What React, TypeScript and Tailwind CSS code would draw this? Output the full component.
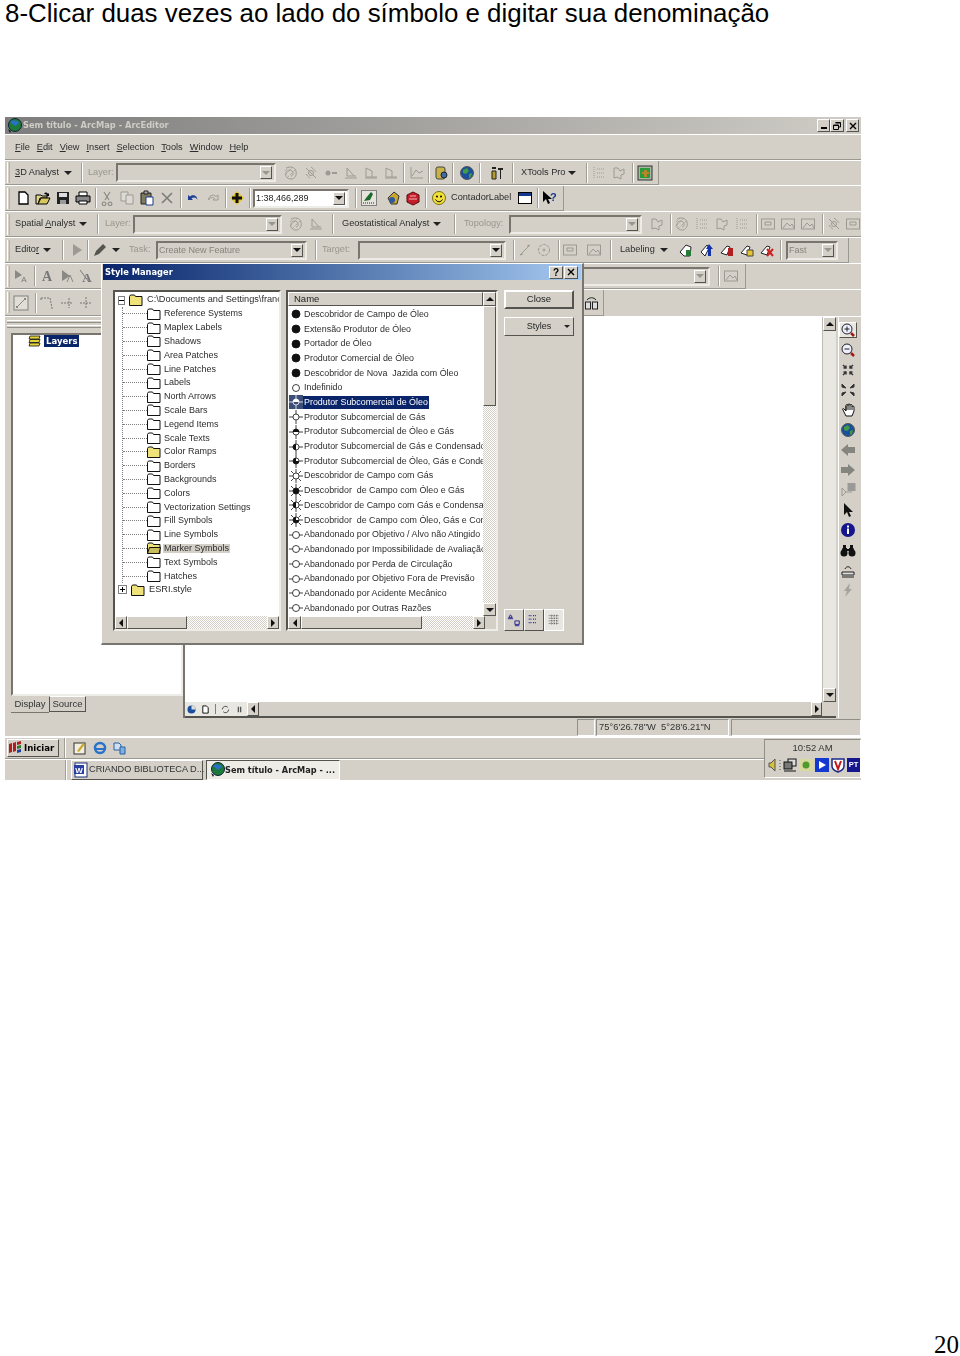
import React from "react";

const treeItems = [
  "Reference Systems", "Maplex Labels", "Shadows", "Area Patches", "Line Patches", "Labels", "North Arrows",
  "Scale Bars", "Legend Items", "Scale Texts", "Color Ramps", "Borders", "Backgrounds", "Colors",
  "Vectorization Settings", "Fill Symbols", "Line Symbols", "Marker Symbols", "Text Symbols", "Hatches",
];

type Fill = "none" | "full" | "top" | "left" | "q3";
const listItems: { name: string; fill: Fill; rays?: number; line?: boolean }[] = [
  { name: "Descobridor de Campo de Óleo", fill: "full" },
  { name: "Extensão Produtor de Óleo", fill: "full" },
  { name: "Portador de Óleo", fill: "full" },
  { name: "Produtor Comercial de Óleo", fill: "full" },
  { name: "Descobridor de Nova  Jazida com Óleo", fill: "full" },
  { name: "Indefinido", fill: "none" },
  { name: "Produtor Subcomercial de Óleo", fill: "top", rays: 4 },
  { name: "Produtor Subcomercial de Gás", fill: "none", rays: 4 },
  { name: "Produtor Subcomercial de Óleo e Gás", fill: "top", rays: 4 },
  { name: "Produtor Subcomercial de Gás e Condensado", fill: "left", rays: 4 },
  { name: "Produtor Subcomercial de Óleo, Gás e Condensado", fill: "q3", rays: 4 },
  { name: "Descobridor de Campo com Gás", fill: "none", rays: 8 },
  { name: "Descobridor  de Campo com Óleo e Gás", fill: "full", rays: 8 },
  { name: "Descobridor de Campo com Gás e Condensado", fill: "left", rays: 8 },
  { name: "Descobridor  de Campo com Óleo, Gás e Condensado", fill: "q3", rays: 8 },
  { name: "Abandonado por Objetivo / Alvo não Atingido", fill: "none", line: true },
  { name: "Abandonado por Impossibilidade de Avaliação", fill: "none", line: true },
  { name: "Abandonado por Perda de Circulação", fill: "none", line: true },
  { name: "Abandonado por Objetivo Fora de Previsão", fill: "none", line: true },
  { name: "Abandonado por Acidente Mecânico", fill: "none", line: true },
  { name: "Abandonado por Outras Razões", fill: "none", line: true },
];

const G = "#9c9a92";
const icons: Record<string, React.ReactNode> = {
  hatch: <g fill="none" stroke={G}><path d="M3 3c4-2 9-1 10 3s-1 8-5 8-6-3-5-6 4-4 6-2 1 5-1 5" /><path d="M2 6l4-4M2 10l8-8M4 13l9-9" strokeDasharray="1 1" /></g>,
  sun: <g fill="none" stroke={G}><path d="M3 3l10 10M8 2c3 2 5 5 5 5M3 9c2 3 4 4 4 4" /><circle cx="8" cy="8" r="2.5" /></g>,
  dots: <g fill={G}><circle cx="5" cy="8" r="2.5" /><path d="M9 7h5v2H9z" /></g>,
  tri1: <path d="M4 3v8h9M2 13h12M4 3l7 8" fill="none" stroke={G} />,
  tri2: <path d="M3 3l6 3v6h5M2 13h12M3 3v9h6" fill="none" stroke={G} />,
  graph: <path d="M2 2v11h12M3 11l4-6 3 3 4-2" fill="none" stroke={G} />,
  book: <g><rect x="3" y="2" width="9" height="12" rx="2" fill="#c9b348" stroke="#444" /><circle cx="11" cy="10" r="3" fill="#3a6ea5" stroke="#222" /></g>,
  globe: <g><circle cx="8" cy="8" r="6.5" fill="#1b4f9c" stroke="#555" /><path d="M4 5l4-2 2 3-3 3-3-1zM10 9l3-1-1 4-2 1z" fill="#3f9b45" /></g>,
  tools: <g><path d="M3 6h4v8H3z" fill="#b59d2b" stroke="#222" /><path d="M9 3h5v2h-2v9h-1V5H9zM3 2h4v2H3z" fill="#222" /></g>,
  grid: <g fill="none" stroke={G} strokeDasharray="1 1"><path d="M3 2v12M6 4h7M6 8h7M6 12h7" /></g>,
  mapg: <path d="M3 3h4l2 3 4-2v5l-3 1v4l-4-2-3 1z" fill="none" stroke={G} />,
  green: <g><rect x="1" y="1" width="14" height="14" fill="#a8b8a0" stroke="#333" /><rect x="3" y="3" width="10" height="10" fill="#2c9a3a" /><path d="M7 5h3v2h2v2h-2v3H7V9H5V7h2z" fill="#b5872a" /></g>,
  new: <path d="M4 2h6l3 3v9H4z" fill="#fff" stroke="#000" strokeWidth="1.3" />,
  open: <g><path d="M1 5h5l1 1h5v2H5l-2 6H1z" fill="#e0d68a" stroke="#000" /><path d="M3 14l3-6h9l-3 6z" fill="#d8c860" stroke="#000" /><path d="M9 4c1-2 3-2 4 0l1-1v3h-3l1-1c-1-1-2-1-3-1z" fill="#000" /></g>,
  save: <g><path d="M2 2h12v12H2z" fill="#222" /><path d="M4 3h8v4H4z" fill="#ddd" /><path d="M5 10h6v4H5z" fill="#999" /></g>,
  print: <g><path d="M4 2h8v4H4z" fill="#fff" stroke="#000" /><path d="M1 6h14v6H1z" fill="#888" stroke="#000" /><path d="M4 11h8v3H4z" fill="#fff" stroke="#000" /></g>,
  cut: <path d="M5 2l5 8M11 2L6 10M5 12a1.8 1.8 0 1 0 .1 0M11 12a1.8 1.8 0 1 0 .1 0" fill="none" stroke="#8a8a84" strokeWidth="1.2" />,
  copy: <g fill="#dcdad2" stroke={G}><path d="M2 2h7v9H2z" /><path d="M7 5h7v9H7z" /></g>,
  paste: <g><path d="M2 3h10v11H2z" fill="#807a5c" stroke="#222" /><path d="M5 1h4v3H5z" fill="#aaa" stroke="#222" /><path d="M7 7h7v8H7z" fill="#fff" stroke="#1b3b8a" /></g>,
  del: <path d="M3 3l10 10M13 3L3 13" fill="none" stroke="#7d7d78" strokeWidth="1.6" />,
  undo: <path d="M3 5v5h5L6.5 8.5C8 7 11 7 12.5 10 12.5 6 8 3.5 5 6.5z" fill="#1d3f94" />,
  redo: <path d="M13 5v5H8l1.5-1.5C8 7 5 7 3.5 10 3.5 6 8 3.5 11 6.5z" fill="none" stroke={G} />,
  add: <g><path d="M8 1l7 7-7 7-7-7z" fill="#e5c72a" /><path d="M6.5 3h3v3.5H13v3H9.5V13h-3V9.5H3v-3h3.5z" fill="#111" /></g>,
  edit: <g><rect x="0.5" y="0.5" width="15" height="15" fill="#e6e3dc" stroke="#808080" /><path d="M2 13h12" stroke="#222" strokeDasharray="1 1" /><path d="M3 11L5 8l4 2zM5 8l5-6 2 2-3 6z" fill="#1a6a2a" /></g>,
  cube: <g><path d="M3 8l6-6 5 4-2 8-6 0z" fill="#c9a82c" stroke="#333" /><circle cx="7" cy="10" r="3" fill="#2d5a9e" /></g>,
  red: <g><path d="M2 5l6-3 6 3v7l-6 3-6-3z" fill="#c41e2a" stroke="#5a0c10" /><path d="M5 6h6M4 9h8" stroke="#f2b6b6" /></g>,
  smile: <g><circle cx="8" cy="8" r="6.5" fill="#f2df3a" stroke="#75700f" /><circle cx="6" cy="6.5" r="1" /><circle cx="10" cy="6.5" r="1" /><path d="M4.5 9.5c2 3 5 3 7 0" fill="none" stroke="#000" /></g>,
  win: <g><rect x="1.5" y="2.5" width="13" height="11" fill="#fff" stroke="#000" /><rect x="2" y="3" width="12" height="3" fill="#123a8c" /></g>,
  help: <g><path d="M2 1v11l3-3 2 5 2-1-2-4h4z" fill="#000" /><text x="9" y="11" fontSize="11" fontWeight="700" fontFamily="Liberation Sans" fill="#17358c">?</text></g>,
  arrowg: <path d="M4 2l9 6-9 6z" fill={G} />,
  pen: <path d="M2 14l2-5 7-7 3 3-7 7z" fill="#55554f" />,
  line: <path d="M3 13L13 3M3 13l3-1M13 3l-3 1" fill="none" stroke={G} />,
  circ: <g fill="none" stroke={G}><circle cx="8" cy="8" r="5.5" strokeDasharray="3 1" /><circle cx="8" cy="8" r="1" /></g>,
  tbl: <g fill="none" stroke={G}><rect x="1.5" y="3" width="13" height="10" /><path d="M5 6h6v3H5z" /></g>,
  pic: <g fill="none" stroke={G}><rect x="1.5" y="3" width="13" height="10" /><path d="M3 12l4-5 3 3 2-2 2 4" /></g>,
  lab1: <g><path d="M2 10l6-7 5 2-1 9H6z" fill="#fff" stroke="#222" /><path d="M8 8h5v6H8z" fill="#2a7a3a" /></g>,
  lab2: <g><path d="M2 10l6-7 2 3-4 8z" fill="#fff" stroke="#222" /><path d="M10 2l4 5h-2v7H9V7H7z" fill="#1233a8" /></g>,
  lab3: <g><path d="M2 11l6-7 3 1-3 8z" fill="#fff" stroke="#222" /><path d="M9 6h5v8H9z" fill="#b01f1f" /></g>,
  lab4: <g><path d="M2 11l6-7 3 1-3 8z" fill="#fff" stroke="#222" /><path d="M8 8h6v6H8z" fill="#e3c52e" stroke="#444" /></g>,
  lab5: <g><path d="M2 11l6-7 3 1-3 8z" fill="#fff" stroke="#222" /><path d="M8 7l6 7M14 7l-6 7" stroke="#d01f1f" strokeWidth="2" /></g>,
  textA: <text x="8" y="13" textAnchor="middle" fontSize="14" fontWeight="700" fontFamily="Liberation Serif" fill="#777">A</text>,
  selA: <g><path d="M2 2l7 5-7 4z" fill="#8a8a84" /><text x="11" y="14" textAnchor="middle" fontSize="8" fontFamily="Liberation Sans" fill="#777">A</text></g>,
  flagA: <g><path d="M3 2l8 6-8 5z" fill="#8a8a84" /><path d="M8 14l3-7 3 7" fill="none" stroke="#8a8a84" /></g>,
  slashA: <g><path d="M2 2l9 12" stroke="#777" /><text x="9" y="14" textAnchor="middle" fontSize="13" fontWeight="700" fontFamily="Liberation Serif" fill="#777">A</text></g>,
  box: <g><rect x="1" y="1" width="14" height="14" fill="#e0ded6" stroke="#808080" /><path d="M4 12l8-8" stroke="#888" /><path d="M3 11h2v2H3zM11 3h2v2h-2z" fill="#888" /></g>,
  nodes: <path d="M2 3h9l2 10M2 3v2M13 13v1" fill="none" stroke="#777" strokeDasharray="2 1" />,
  cross1: <path d="M2 8h11M10 3v10" fill="none" stroke="#777" strokeDasharray="2 1" />,
  cross2: <path d="M2 8h12M8 2v12" fill="none" stroke="#777" strokeDasharray="2 1" />,
  catalog: <g fill="none" stroke="#222"><path d="M3 5c2-3 7-3 9 0" /><rect x="1.5" y="7" width="5" height="7" fill="#ddd" /><rect x="8.5" y="7" width="5" height="7" fill="#ddd" /></g>,
  zoomIn: <g><circle cx="7" cy="7" r="5" fill="#eef" stroke="#222" /><path d="M4.5 7h5M7 4.5v5" stroke="#222" /><path d="M11 11l3 3" stroke="#a01818" strokeWidth="2.5" /></g>,
  zoomOut: <g><circle cx="7" cy="7" r="5" fill="#eef" stroke="#222" /><path d="M4.5 7h5" stroke="#222" /><path d="M11 11l3 3" stroke="#a01818" strokeWidth="2.5" /></g>,
  fixIn: <path d="M3 3l3 3M6 3.5V6H3.5M13 3l-3 3M10 3.5V6h2.5M3 13l3-3M6 12.5V10H3.5M13 13l-3-3M10 12.5V10h2.5" fill="none" stroke="#333" strokeWidth="1.4" />,
  fixOut: <path d="M6 6L2 2v3zM10 6l4-4v3zM6 10l-4 4v-3zM10 10l4 4v-3z" fill="#333" stroke="#333" />,
  hand: <g fill="#fff" stroke="#111"><path d="M3 8l3 6h6l2-5V5a1 1 0 0 0-2 0V3.500a1 1 0 0 0-2 0V3a1 1 0 0 0-2 0v.5a1 1 0 0 0-2 0V9L4 7c-1-1-2 0-1 1z" /><path d="M6 4v4M8 3v5M10 3.500V8M12 5v3" /></g>,
  back: <path d="M8 2L1 8l7 6v-3h7V5H8z" fill="#85857f" />,
  fwd: <path d="M8 2l7 6-7 6v-3H1V5h7z" fill="#85857f" />,
  layout: <g fill="none" stroke={G}><rect x="8" y="1.5" width="7" height="7" fill="#999" /><path d="M2 6l4 4-4 4zM6 10h6" /></g>,
  pointer: <path d="M4 1v12l3-3 2 5 2-1-2-4h4z" fill="#111" />,
  info: <g><circle cx="8" cy="8" r="7" fill="#15158c" /><path d="M7 6.500h2V12H7zM7 3.500h2v2H7z" fill="#fff" /></g>,
  binoc: <g fill="#111"><path d="M3 3h3v3H3zM10 3h3v3h-3z" /><circle cx="4" cy="11" r="3.500" /><circle cx="12" cy="11" r="3.500" /><path d="M2.500 6h4.500v5H1zM9 6h4.500L15 11H9zM7 7h2v2H7z" /></g>,
  measure: <g fill="none" stroke="#222"><path d="M2 10h12v3H2z" fill="#ddd" /><path d="M5 7c1-3 5-3 6 0" /><path d="M2 15h12" /></g>,
  bolt: <path d="M10 1L4 9h3l-2 6 7-8H9z" fill="#a3a39d" />,
  word: <g><rect x="2" y="1" width="12" height="14" fill="#fff" stroke="#1a2c7a" /><rect x="1" y="3" width="10" height="9" fill="#2a3fa0" /><text x="6" y="10.500" textAnchor="middle" fontSize="8" fontWeight="700" fontFamily="Liberation Sans" fill="#fff">W</text></g>,
  earth: <g><circle cx="9" cy="7" r="6.5" fill="#1c7a3a" stroke="#123" /><path d="M4 4c3-2 7-2 9 1l-4 3z" fill="#2b6fc9" /><path d="M2 11l3 2-1 2z" fill="#111" /></g>,
  flag: <g><path d="M1 4l3-1v9l-3 1zM5 3l3-1v9l-3 1zM9 2l4-1v3l-4 1z" fill="#b02020" /><path d="M9 6l4-1v3l-4 1z" fill="#2c7a2c" /><path d="M9 10l4-1v3l-4 1z" fill="#1c3fa0" /></g>,
  note: <g><rect x="2" y="3" width="11" height="11" fill="#f2efe0" stroke="#333" /><path d="M5 11l6-8 2 1-6 8z" fill="#c9a82c" /></g>,
  ie: <g><circle cx="8" cy="8" r="5" fill="none" stroke="#2a72c9" strokeWidth="2.5" /><path d="M3 9h10" stroke="#2a72c9" strokeWidth="2" /></g>,
  sync: <g><path d="M3 3h5l2 2v5H3z" fill="#cfe0f2" stroke="#2a60a0" /><path d="M9 7h5v7H9z" fill="#7fb0e0" stroke="#2a60a0" /></g>,
  spk: <g><path d="M3 6h2l4-4v12l-4-4H3z" fill="#d4c23a" stroke="#555" /><path d="M14 3v10" stroke="#555" strokeDasharray="1 2" /></g>,
  pcs: <g><rect x="6" y="2" width="8" height="7" fill="#ddd" stroke="#111" /><rect x="2" y="5" width="8" height="7" fill="#777" stroke="#111" /><path d="M2 14h12" stroke="#111" /></g>,
  nv: <g><rect x="1" y="2" width="14" height="12" fill="#d8d8a0" /><circle cx="8" cy="8" r="3.5" fill="#4f9a2a" /></g>,
  play: <g><rect x="1" y="1" width="14" height="14" fill="#1238d0" /><path d="M5 4l7 4-7 4z" fill="#fff" /></g>,
  vs: <g><path d="M2 2h12v7c0 3-3 5-6 6-3-1-6-3-6-6z" fill="#fff" stroke="#1a2a8a" strokeWidth="1.5" /><path d="M5 4l3 8 3-8" fill="none" stroke="#c01818" strokeWidth="2" /></g>,
};

const Ic = ({ n, className = "" }: { n: string; className?: string }) => (
  <svg viewBox="0 0 16 16" className={`w-4 h-4 shrink-0 ${className}`}>{icons[n]}</svg>
);

const Sep = ({ className = "" }: { className?: string }) => (
  <div className={`w-[2px] h-[20px] shrink-0 border-l border-r border-l-[#a09e96] border-r-white ${className}`} />
);

const Grip = ({ className = "ml-[2px]" }: { className?: string }) => (
  <div className={`w-[3px] h-[21px] shrink-0 border-l border-r border-l-white border-r-[#b4b2aa] ${className}`} />
);

const T = ({ children, className = "", off }: { children: React.ReactNode; className?: string; off?: boolean }) => (
  <span className={`shrink-0 whitespace-nowrap text-[9.2px] leading-none ${off ? "text-[#98968e]" : "text-[#2c2c2c]"} ${className}`}>
    {children}
  </span>
);

const Caret = ({ className = "" }: { className?: string }) => (
  <div className={`w-2 shrink-0 flex justify-center ${className}`}>
    <div className="border-t-[4px] border-x-[4px] border-t-[#222] border-x-transparent" />
  </div>
);

const Arrow = ({ dir, off }: { dir: "up" | "down" | "left" | "right"; off?: boolean }) => {
  const d = { up: "M4 2L0 6h8z", down: "M0 2h8L4 6z", left: "M6 0v8L2 4z", right: "M2 0v8l4-4z" }[dir];
  return (
    <svg viewBox="0 0 8 8" className="w-2 h-2">
      <path d={d} fill={off ? "#98968e" : "#111"} />
    </svg>
  );
};

const Btn = ({ children, className = "" }: { children?: React.ReactNode; className?: string }) => (
  <div className={`flex items-center justify-center shrink-0 bg-[#d4d0c8] border border-t-white border-l-white border-r-[#55534e] border-b-[#55534e] ${className}`}>
    {children}
  </div>
);

const Combo = ({ className = "", text, white, off = true }: { className?: string; text?: string; white?: boolean; off?: boolean }) => (
  <div className={`h-[19px] shrink-0 flex items-center justify-between pl-[1px] pr-[2px] border-2 border-t-[#77756e] border-l-[#77756e] border-r-[#eeece6] border-b-[#eeece6] ${white ? "bg-white" : "bg-[#d4d0c8]"} ${className}`}>
    <span className={`text-[9px] leading-none whitespace-nowrap ${white ? "text-[#222]" : "text-[#85837b]"}`}>{text}</span>
    <Btn className="w-[12px] h-[13px]"><Arrow dir="down" off={off} /></Btn>
  </div>
);

const Row = ({ children, className = "" }: { children: React.ReactNode; className?: string }) => (
  <div className={`flex items-center border-t border-t-white ${className}`}>
    <div className="flex items-center h-full w-fit border-b border-r border-b-[#9a988f] border-r-[#9a988f]">{children}</div>
  </div>
);

const Marker = ({ fill, rays = 0, line, selected }: { fill: Fill; rays?: number; line?: boolean; selected?: boolean }) => {
  const c = selected ? "#fff" : "#111";
  const r = rays ? 3 : fill === "full" ? 4 : 3.5;
  const shape =
    fill === "full" ? <circle cx="7" cy="7" r={r} fill={c} />
    : fill === "top" ? <path d={`M${7 - r} 7a${r} ${r} 0 0 1 ${2 * r} 0z`} fill={c} />
    : fill === "left" ? <path d={`M7 ${7 - r}a${r} ${r} 0 0 0 0 ${2 * r}z`} fill={c} />
    : fill === "q3" ? <path d={`M7 7V${7 - r}a${r} ${r} 0 1 0 ${r} ${r}z`} fill={c} />
    : null;
  return (
    <svg viewBox="0 0 14 14" className={`w-[14px] h-[14px] shrink-0 ${selected ? "bg-[#3c4f78]" : ""}`}>
      <circle cx="7" cy="7" r={r} fill={selected ? "none" : "#fff"} stroke={c} strokeWidth="0.8" />
      {shape}
      {line && <path d="M0 7h3.5M10.5 7H14" stroke={c} strokeWidth="0.8" />}
      {rays >= 4 && <path d="M7 0v4M7 10v4M0 7h4M10 7h4" stroke={c} strokeWidth="0.8" />}
      {rays === 8 && <path d="M2 2l2.5 2.5M12 2L9.5 4.5M2 12l2.5-2.5M12 12L9.5 9.5" stroke={c} strokeWidth="0.8" />}
    </svg>
  );
};

const Folder = ({ color = "#fff", open }: { color?: string; open?: boolean }) => (
  <svg viewBox="0 0 14 12" className="w-[14px] h-[12px] shrink-0">
    <path d="M.5 2.5l1-1.500h4l1 1.500h6.500v9H.5z" fill={color} stroke="#111" />
    {open && <path d="M.5 11.5l2-6h11l-1.500 6z" fill="#c9bd5a" stroke="#111" />}
  </svg>
);

const track = "bg-[repeating-conic-gradient(#d4d0c8_0_25%,#fff_0_50%)] bg-[length:2px_2px]";

const StyleManager = () => (
  <div className="absolute left-[96px] top-[146px] w-[483px] h-[382px] bg-[#d4d0c8] border-t border-l border-r-2 border-b-2 border-t-white border-l-white border-r-[#77756e] border-b-[#77756e] flex flex-col">
    <div className="h-[16px] mx-px flex items-center justify-between bg-gradient-to-r from-[#0a246a] to-[#a6caf0] pl-[2px] pr-[3px]">
      <span className="text-[8.3px] font-bold text-white font-['DejaVu_Sans'] leading-none">Style Manager</span>
      <div className="flex gap-px">
        <Btn className="w-[14px] h-[13px] text-[10px] font-bold text-black">?</Btn>
        <Btn className="w-[14px] h-[13px]">
          <svg viewBox="0 0 8 8" className="w-2 h-2"><path d="M1 1l6 6M7 1L1 7" stroke="#000" strokeWidth="1.4" /></svg>
        </Btn>
      </div>
    </div>
    <div className="flex mt-[10px] ml-[11px]">
      <div className="w-[168px] h-[341px] bg-white border-2 border-t-[#55534e] border-l-[#55534e] border-r-[#eeece6] border-b-[#eeece6] flex flex-col">
        <div className="flex-1 pl-[2px] pt-px overflow-hidden">
          <div className="flex items-center h-[14px]">
            <div className="w-[9px] h-[9px] ml-px border border-[#808080] flex items-center justify-center text-[9px] leading-none">
              <div className="w-[5px] h-px bg-black" />
            </div>
            <div className="ml-[4px]"><Folder color="#efe27a" /></div>
            <T className="ml-[4px]">C:\Documents and Settings\franc</T>
          </div>
          <div className="ml-[5px] border-l border-dotted border-l-[#808080]">
            {treeItems.map((item) => (
              <div key={item} className="flex items-center h-[13.8px]">
                <div className="w-[24px] border-t border-dotted border-t-[#808080]" />
                {item === "Marker Symbols" ? <Folder color="#efe27a" open /> : <Folder color={item === "Color Ramps" ? "#efe27a" : "#fff"} />}
                <T className={`ml-[2px] px-[1px] text-[9px] ${item === "Marker Symbols" ? "bg-[#d4d0c8]" : ""}`}>{item}</T>
              </div>
            ))}
          </div>
          <div className="flex items-center h-[14px]">
            <div className="w-[9px] h-[9px] ml-px border border-[#808080] flex items-center justify-center relative">
              <div className="w-[5px] h-px bg-black" />
              <div className="absolute w-px h-[5px] bg-black" />
            </div>
            <div className="ml-[4px]"><Folder color="#efe27a" /></div>
            <T className="ml-[4px]">ESRI.style</T>
          </div>
        </div>
        <div className={`flex h-[13px] shrink-0 ${track}`}>
          <Btn className="w-[12px] h-[13px]"><Arrow dir="left" /></Btn>
          <Btn className="w-[60px] h-[13px]" />
          <div className="flex-1" />
          <Btn className="w-[12px] h-[13px]"><Arrow dir="right" /></Btn>
        </div>
      </div>
      <div className="w-[212px] h-[341px] ml-[5px] bg-white border-2 border-t-[#55534e] border-l-[#55534e] border-r-[#eeece6] border-b-[#eeece6] flex flex-col">
        <div className="flex flex-1 min-h-0">
          <div className="flex-1 min-w-0 flex flex-col">
            <Btn className="h-[14px] justify-start pl-[5px] text-[9.5px] leading-none text-[#222]">Name</Btn>
            <div className="flex-1 overflow-hidden pt-[1px] pl-[1px]">
              {listItems.map((it, i) => (
                <div key={i} className="flex items-center h-[14.7px] whitespace-pre">
                  <Marker fill={it.fill} rays={it.rays} line={it.line} selected={i === 6} />
                  <span className={`px-px h-[13px] flex items-center text-[8.9px] leading-none ${i === 6 ? "bg-[#0a246a] text-white" : "text-[#2c2c2c]"}`}>
                    {it.name}
                  </span>
                </div>
              ))}
            </div>
          </div>
          <div className={`w-[13px] flex flex-col ${track}`}>
            <Btn className="w-[13px] h-[14px]"><Arrow dir="up" /></Btn>
            <Btn className="w-[13px] h-[100px]" />
            <div className="flex-1" />
            <Btn className="w-[13px] h-[13px]"><Arrow dir="down" /></Btn>
          </div>
        </div>
        <div className="flex h-[13px] shrink-0">
          <div className={`flex w-[197px] ${track}`}>
            <Btn className="w-[13px] h-[13px]"><Arrow dir="left" /></Btn>
            <Btn className="w-[121px] h-[13px]" />
            <div className="flex-1" />
            <Btn className="w-[12px] h-[13px]"><Arrow dir="right" /></Btn>
          </div>
          <div className="flex-1 bg-[#d4d0c8]" />
        </div>
      </div>
      <div className="ml-[6px] w-[70px] flex flex-col">
        <Btn className="w-[70px] h-[19px] border-2 border-t-white border-l-white border-r-[#444] border-b-[#444] text-[9.5px] text-[#222]">Close</Btn>
        <Btn className="w-[70px] h-[19px] mt-[8px] text-[9px] text-[#222] relative">
          Styles
          <div className="absolute right-[3px] top-[7px] border-t-[3px] border-x-[3px] border-t-[#222] border-x-transparent" />
        </Btn>
        <div className="mt-auto flex">
          <Btn className="w-[20px] h-[22px]">
            <svg viewBox="0 0 16 16" className="w-[14px] h-[14px]"><path d="M2 5l2-3 2 3zM1 6.5h6M9 9h5v4H9zM9 14.5h5" fill="none" stroke="#15158c" /></svg>
          </Btn>
          <Btn className="w-[20px] h-[22px]">
            <svg viewBox="0 0 16 16" className="w-[14px] h-[14px]"><path d="M2 3h3M7 3h3M2 7h3M7 7h3M2 11h3M7 11h3" stroke="#15158c" strokeWidth="1.5" strokeDasharray="1 1" /></svg>
          </Btn>
          <Btn className="w-[20px] h-[22px] bg-[#e8e6e0] border-t-[#55534e] border-l-[#55534e] border-r-white border-b-white">
            <svg viewBox="0 0 16 16" className="w-[14px] h-[14px]"><path d="M2 3h12M2 6h12M2 9h12M2 12h12M5 2v12M8 2v12M11 2v12" stroke="#555" strokeDasharray="1 1" /></svg>
          </Btn>
        </div>
      </div>
    </div>
  </div>
);

export default function App() {
  return (
    <div className="w-[960px] h-[1356px] bg-white overflow-hidden font-['Liberation_Sans',sans-serif]">
      <div className="h-[117px] pl-[5px] text-[25.9px] leading-[27px] text-black whitespace-nowrap">
        8-Clicar duas vezes ao lado do símbolo e digitar sua denominação
      </div>

      <div className="relative ml-[5px] w-[856px] h-[663px] bg-[#d4d0c8] overflow-hidden flex flex-col blur-[0.35px]">
        <div className="h-[17px] shrink-0 flex items-center justify-between bg-gradient-to-r from-[#7d7d7d] to-[#cfcdc6] pl-px pr-[2px]">
          <div className="flex items-center">
            <Ic n="earth" />
            <span className="ml-[1px] text-[8.3px] font-bold text-[#cfcdc6] font-['DejaVu_Sans'] leading-none">Sem título - ArcMap - ArcEditor</span>
          </div>
          <div className="flex">
            <Btn className="w-[13px] h-[13px] items-end pb-[2px]"><div className="w-[6px] h-[2px] bg-black" /></Btn>
            <Btn className="w-[14px] h-[13px]">
              <svg viewBox="0 0 10 10" className="w-[10px] h-[10px]"><path d="M3.5 1.5h5V6H7M1.5 4h5v4.5h-5zM3.5 2h5M1.5 4.500h5" fill="none" stroke="#000" /></svg>
            </Btn>
            <Btn className="w-[13px] h-[13px] ml-[2px]">
              <svg viewBox="0 0 8 8" className="w-2 h-2"><path d="M1 1l6 6M7 1L1 7" stroke="#000" strokeWidth="1.4" /></svg>
            </Btn>
          </div>
        </div>

        <div className="h-[26px] shrink-0 flex items-center pt-px border-t border-b border-t-white border-b-[#9a988f] pl-[10px] gap-[7px] text-[9.2px] text-[#2c2c2c]">
          <span><u>F</u>ile</span>
          <span><u>E</u>dit</span>
          <span><u>V</u>iew</span>
          <span><u>I</u>nsert</span>
          <span><u>S</u>election</span>
          <span><u>T</u>ools</span>
          <span><u>W</u>indow</span>
          <span><u>H</u>elp</span>
        </div>

        <Row className="h-[25px] shrink-0">
          <Grip />
          <T className="ml-[5px] w-[47px]"><u>3</u>D Analyst</T>
          <Caret className="ml-[2px]" />
          <Sep className="ml-[9px]" />
          <T off className="ml-[5px] w-[25px]">Layer:</T>
          <Combo className="ml-[3px] w-[160px]" />
          <div className="flex gap-1 ml-[7px]">
            <Ic n="hatch" /><Ic n="sun" /><Ic n="dots" /><Ic n="tri1" /><Ic n="tri2" /><Ic n="tri2" />
          </div>
          <Sep className="ml-1" />
          <Ic n="graph" className="ml-1" />
          <Sep className="ml-[3px]" />
          <Ic n="book" className="ml-[3px]" />
          <Sep className="ml-[3px]" />
          <Ic n="globe" className="ml-[5px]" />
          <Sep className="ml-1" />
          <Ic n="tools" className="ml-2" />
          <Sep className="ml-[7px]" />
          <T className="ml-[7px] w-[44px]">XTools Pro</T>
          <Caret className="ml-[3px]" />
          <Sep className="ml-[10px]" />
          <Ic n="grid" className="ml-[3px]" />
          <Ic n="mapg" className="ml-1" />
          <Sep className="ml-[5px]" />
          <Ic n="green" className="ml-[3px] mr-[5px]" />
        </Row>

        <Row className="h-[26px] shrink-0">
          <Grip />
          <div className="flex gap-1 ml-[5px]"><Ic n="new" /><Ic n="open" /><Ic n="save" /><Ic n="print" /></div>
          <Sep className="ml-1" />
          <div className="flex gap-1 ml-[2px]"><Ic n="cut" /><Ic n="copy" /><Ic n="paste" /><Ic n="del" /></div>
          <Sep className="ml-[5px]" />
          <div className="flex gap-1 ml-[3px]"><Ic n="undo" /><Ic n="redo" /></div>
          <Sep className="ml-1" />
          <Ic n="add" className="ml-[2px]" />
          <Sep className="ml-1" />
          <Combo white off={false} text="1:38,466,289" className="ml-[2px] w-[96px]" />
          <Sep className="ml-[6px]" />
          <Ic n="edit" className="ml-1" />
          <Ic n="cube" className="ml-2" />
          <Ic n="red" className="ml-1" />
          <Sep className="ml-1" />
          <Ic n="smile" className="ml-1" />
          <T className="ml-1 w-[60px]">ContadorLabel</T>
          <Ic n="win" className="ml-[6px]" />
          <Sep className="ml-1" />
          <Ic n="help" className="ml-[2px] mr-[6px]" />
        </Row>

        <Row className="h-[26px] shrink-0">
          <Grip />
          <T className="ml-[5px] w-[62px]">Spatial <u>A</u>nalyst</T>
          <Caret className="ml-[2px]" />
          <Sep className="ml-[10px]" />
          <T off className="ml-[6px] w-[25px]">Layer:</T>
          <Combo className="ml-[3px] w-[149px]" />
          <Ic n="hatch" className="ml-[6px]" />
          <Ic n="tri1" className="ml-1" />
          <Sep className="ml-2" />
          <T className="ml-2 w-[88px]">Geostatistical Analyst</T>
          <Caret className="ml-[3px]" />
          <Sep className="ml-[13px]" />
          <T off className="ml-2 w-[42px]">Topology:</T>
          <Combo className="ml-[3px] w-[133px]" />
          <Ic n="mapg" className="ml-[7px]" />
          <Sep className="ml-[5px]" />
          <div className="flex gap-1 ml-[2px]"><Ic n="hatch" /><Ic n="grid" /><Ic n="mapg" /><Ic n="grid" /></div>
          <Sep className="ml-[6px]" />
          <div className="flex gap-1 ml-[2px]"><Ic n="tbl" /><Ic n="pic" /><Ic n="pic" /></div>
          <Sep className="ml-[6px]" />
          <Ic n="sun" className="ml-[2px]" />
          <Ic n="tbl" className="ml-[3px]" />
        </Row>

        <Row className="h-[26px] shrink-0">
          <Grip />
          <T className="ml-[5px] w-[28px]">Edito<u>r</u></T>
          <Caret />
          <Sep className="ml-[11px]" />
          <Ic n="arrowg" className="ml-[5px]" />
          <Sep className="ml-[2px]" />
          <Ic n="pen" className="ml-[3px]" />
          <Caret className="ml-1" />
          <T off className="ml-[9px] w-[25px]">Task:</T>
          <Combo text="Create New Feature" off={false} className="ml-[2px] w-[151px]" />
          <Sep className="ml-2" />
          <T off className="ml-[5px] w-[33px]">Target:</T>
          <Combo className="ml-[3px] w-[148px]" off={false} />
          <Sep className="ml-[7px]" />
          <Ic n="line" className="ml-[2px]" />
          <Ic n="circ" className="ml-[3px]" />
          <Sep className="ml-[6px]" />
          <Ic n="tbl" className="ml-[2px]" />
          <Ic n="pic" className="ml-2" />
          <Sep className="ml-2" />
          <T className="ml-2 w-[36px]">Labeling</T>
          <Caret className="ml-1" />
          <Ic n="lab1" className="ml-[10px]" />
          <Ic n="lab2" className="ml-[5px]" />
          <Ic n="lab3" className="ml-1" />
          <Ic n="lab4" className="ml-1" />
          <Ic n="lab5" className="ml-1" />
          <Sep className="ml-[5px]" />
          <Combo text="Fast" className="ml-1 w-[52px] mr-[10px]" />
        </Row>

        <Row className="h-[26px] shrink-0">
          <Grip />
          <Ic n="selA" className="ml-[3px]" />
          <Sep className="ml-[5px]" />
          <Ic n="textA" className="ml-[3px]" />
          <Ic n="flagA" className="ml-1" />
          <Ic n="slashA" className="ml-[3px]" />
          <Combo className="ml-[446px] w-[170px]" />
          <Sep className="ml-2" />
          <Ic n="pic" className="ml-[3px] mr-[6px]" />
        </Row>

        <Row className="h-[27px] shrink-0">
          <Grip />
          <Ic n="box" className="ml-[3px]" />
          <Sep className="ml-[6px]" />
          <Ic n="nodes" className="ml-[2px]" />
          <Ic n="cross1" className="ml-1" />
          <Ic n="cross2" className="ml-[3px]" />
          <Ic n="catalog" className="ml-[490px] mr-[3px]" />
        </Row>

        <div className="h-[402px] shrink-0 flex border-t border-t-white">
          <div className="w-[180px] shrink-0 flex flex-col border-r-2 border-r-[#77756e]">
            <div className="h-[16px] shrink-0 pt-[3px] px-[2px] flex flex-col gap-[2px]">
              <div className="h-[3px] border-y border-t-white border-b-[#908e86]" />
              <div className="h-[3px] border-y border-t-white border-b-[#908e86]" />
            </div>
            <div className="ml-[6px] w-[172px] h-[363px] shrink-0 bg-white border-2 border-t-[#77756e] border-l-[#77756e] border-r-[#eeece6] border-b-[#eeece6] flex items-start pl-[15px]">
              <svg viewBox="0 0 14 12" className="w-[14px] h-[12px] shrink-0">
                <path d="M2 1h10l-1 3H1zM2 4.5h10l-1 3H1zM2 8h10l-1 3H1z" fill="#e3d33a" stroke="#111" strokeWidth="0.8" />
              </svg>
              <span className="ml-[2px] px-[2px] h-[12px] flex items-center bg-[#0a246a] text-white text-[8.5px] font-bold font-['DejaVu_Sans'] leading-none">Layers</span>
            </div>
            <div className="flex ml-[6px] items-start">
              <div className="w-[38px] h-[17px] flex items-center justify-center text-[9.5px] text-[#333] border-b border-b-[#77756e]">Display</div>
              <div className="w-[37px] h-[16px] flex items-center justify-center text-[9.5px] text-[#333] border border-t-white border-l-[#55534e] border-r-[#55534e] border-b-[#55534e]">Source</div>
            </div>
          </div>

          <div className="flex-1 min-w-0 flex flex-col">
            <div className="flex flex-1 min-h-0">
              <div className="flex-1 bg-white" />
              <div className="w-[14px] shrink-0 flex flex-col justify-between bg-[#e9e7e2] border-l border-l-[#bdbbb3]">
                <Btn className="w-[13px] h-[14px]"><Arrow dir="up" /></Btn>
                <Btn className="w-[13px] h-[14px]"><Arrow dir="down" /></Btn>
              </div>
            </div>
            <div className="h-[16px] shrink-0 flex items-center border-b-2 border-b-[#55534e]">
              <div className="flex items-center w-[62px] gap-[5px] pl-[2px] bg-[#e9e7e2] h-full">
                <svg viewBox="0 0 10 10" className="w-[9px] h-[9px] shrink-0"><circle cx="5" cy="5" r="4.5" fill="#1b4f9c" /><path d="M5 5V.5A4.5 4.5 0 0 1 9.5 5z" fill="#ddd" /></svg>
                <svg viewBox="0 0 10 10" className="w-[9px] h-[9px] shrink-0"><path d="M2 1h4l2 2v6H2z" fill="#fff" stroke="#000" /></svg>
                <div className="w-px h-[10px] bg-[#808080]" />
                <svg viewBox="0 0 10 10" className="w-[9px] h-[9px] shrink-0"><path d="M1.5 5a3.5 3.5 0 0 1 6-2.5M8.5 5a3.5 3.5 0 0 1-6 2.5" fill="none" stroke="#444" /></svg>
                <svg viewBox="0 0 10 10" className="w-[9px] h-[9px] shrink-0"><path d="M3 2h1.5v6H3zM5.5 2H7v6H5.500z" fill="#555" /></svg>
              </div>
              <Btn className="w-[12px] h-[14px]"><Arrow dir="left" /></Btn>
              <div className="flex-1 h-full" />
              <Btn className="w-[11px] h-[14px]"><Arrow dir="right" /></Btn>
              <div className="w-[14px]" />
            </div>
          </div>

          <div className="w-[23px] shrink-0 ml-[2px] flex flex-col items-center pt-[5px] pr-[5px] gap-1 bg-[#d4d0c8] border-l border-l-white">
            <Btn className="w-[18px] h-[16px] bg-[#e9e7e2]"><Ic n="zoomIn" /></Btn>
            <Ic n="zoomOut" /><Ic n="fixIn" /><Ic n="fixOut" /><Ic n="hand" /><Ic n="globe" /><Ic n="back" /><Ic n="fwd" /><Ic n="layout" />
            <Ic n="pointer" /><Ic n="info" /><Ic n="binoc" /><Ic n="measure" /><Ic n="bolt" />
          </div>
        </div>

        <div className="h-[18px] shrink-0 flex items-stretch pt-px pl-[572px] text-[9.4px] text-[#333]">
          <div className="w-[18px] border border-t-[#908e86] border-l-[#908e86] border-r-white border-b-white" />
          <div className="w-[133px] ml-px flex items-center pl-[2px] border border-t-[#908e86] border-l-[#908e86] border-r-white border-b-white whitespace-pre">75°6'26.78"W  5°28'6.21"N</div>
          <div className="flex-1 ml-[2px] border border-t-[#908e86] border-l-[#908e86] border-r-white border-b-white" />
        </div>

        <div className="h-[44px] shrink-0 flex border-t-2 border-t-white">
          <div className="flex-1 min-w-0 flex flex-col">
            <div className="h-[21px] flex items-center border-b border-b-[#9a988f]">
              <Btn className="ml-[2px] w-[52px] h-[18px] justify-start border-r-[#333] border-b-[#333]">
                <Ic n="flag" />
                <span className="text-[8.6px] font-bold font-['DejaVu_Sans'] leading-none text-black">Iniciar</span>
              </Btn>
              <Sep className="ml-[5px]" />
              <Ic n="note" className="ml-[6px]" />
              <Ic n="ie" className="ml-1" />
              <Ic n="sync" className="ml-[3px]" />
            </div>
            <div className="flex-1 flex items-center border-t border-t-white pl-[60px]">
              <Sep />
              <Btn className="ml-[4px] w-[132px] h-[20px] justify-start pl-[1px] gap-0 border-r-[#444] border-b-[#444] whitespace-nowrap">
                <Ic n="word" />
                <span className="text-[9.2px] leading-none text-[#333]">CRIANDO BIBLIOTECA D...</span>
              </Btn>
              <div className="ml-[3px] w-[134px] h-[20px] flex items-center pl-[2px] gap-0 whitespace-nowrap bg-[#eeece6] border border-t-[#55534e] border-l-[#55534e] border-r-white border-b-white">
                <Ic n="earth" />
                <span className="text-[8.2px] font-bold font-['DejaVu_Sans'] leading-none text-[#222]">Sem título - ArcMap - ...</span>
              </div>
            </div>
          </div>
          <div className="w-[97px] shrink-0 mt-[1px] mb-[2px] flex flex-col border border-t-[#908e86] border-l-[#908e86] border-r-white border-b-white">
            <span className="mt-[3px] text-[9.5px] leading-none text-[#333] text-center">10:52 AM</span>
            <div className="mt-[4px] ml-[1px] flex items-center">
              <Ic n="spk" /><Ic n="pcs" /><Ic n="nv" /><Ic n="play" /><Ic n="vs" />
              <div className="w-[14px] h-[14px] ml-px flex items-center justify-center bg-[#15158c] text-[7.5px] leading-none font-bold text-white">PT</div>
            </div>
          </div>
        </div>

        <StyleManager />
      </div>

      <div className="h-[576px] flex items-end justify-end pr-px text-[25px] leading-[22px] font-['Liberation_Serif',serif] text-black">
        20
      </div>
    </div>
  );
}
